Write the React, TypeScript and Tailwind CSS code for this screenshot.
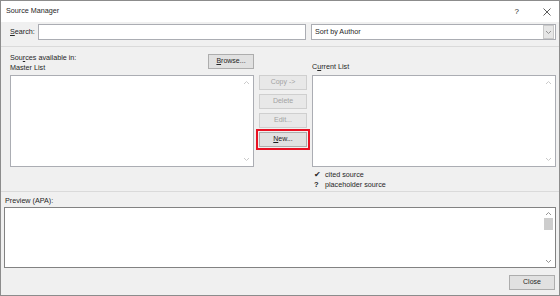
import React from 'react';

const font = { fontFamily: '"Liberation Sans", Arial, sans-serif' };

const Chevron: React.FC<{ dir: 'up' | 'down'; className?: string }> = ({ dir, className }) => (
  <svg width="7" height="5" viewBox="0 0 7 5" className={className}>
    {dir === 'up' ? (
      <polyline points="1,4 3.5,1.5 6,4" fill="none" stroke="currentColor" strokeWidth="0.9" />
    ) : (
      <polyline points="1,1 3.5,3.5 6,1" fill="none" stroke="currentColor" strokeWidth="0.9" />
    )}
  </svg>
);

const ListBox: React.FC<{ className?: string }> = ({ className }) => (
  <div className={`relative bg-white border border-[#abadb3] ${className ?? ''}`}>
    <Chevron dir="up" className="absolute right-[3px] top-[4px] text-[#c4c4c4]" />
    <Chevron dir="down" className="absolute right-[3px] bottom-[4px] text-[#c4c4c4]" />
  </div>
);

const SideButton: React.FC<{ label: React.ReactNode; disabled?: boolean }> = ({ label, disabled }) => (
  <div
    className={`h-[15px] w-[48px] flex items-center justify-center border text-[7px] ${
      disabled ? 'bg-[#e8e8e8] border-[#cfcfcf] text-[#a3a3a3]' : 'bg-[#e1e1e1] border-[#adadad] text-[#1e1e1e]'
    }`}
  >
    {label}
  </div>
);

export default function App() {
  return (
    <div style={font} className="w-[560px] h-[296px] border border-[#8c8c8c] bg-[#f0f0f0] flex flex-col text-[7.2px] text-[#262626] overflow-hidden">
      {/* title bar */}
      <div className="h-[21px] bg-white flex items-center pl-[5px] pr-[8px] shrink-0">
        <span className="flex-1">Source Manager</span>
        <span className="text-[8px] mr-[24px]">?</span>
        <svg width="8" height="8" viewBox="0 0 8 8">
          <path d="M0.5 0.5 L7.5 7.5 M7.5 0.5 L0.5 7.5" stroke="#333" strokeWidth="0.8" />
        </svg>
      </div>

      {/* search row */}
      <div className="flex items-center h-[16px] mt-[2px] pl-[9px] pr-[3px] shrink-0">
        <span className="w-[28px]">
          <span className="underline">S</span>earch:
        </span>
        <div className="w-[268px] h-[16px] bg-white border border-[#abadb3]" />
        <div className="ml-[5px] flex-1 h-[16px] bg-white border border-[#abadb3] flex items-center">
          <span className="flex-1 pl-[3px]">Sort by Author</span>
          <div className="w-[11px] h-[14px] mr-[1px] bg-[#e6e6e6] border border-[#c9c9c9] flex items-center justify-center text-[#8a8a8a]">
            <Chevron dir="down" />
          </div>
        </div>
      </div>

      <div className="mt-[6px] border-t border-[#dadada] shrink-0" />

      {/* middle section */}
      <div className="flex pl-[9px] pr-[3px] pt-[5px] shrink-0">
        <div className="w-[244px] flex flex-col">
          <div className="flex items-start justify-between h-[23px]">
            <div className="leading-[10px] pt-[1px]">
              <div>
                Sou<span className="underline">r</span>ces available in:
              </div>
              <div>Master List</div>
            </div>
            <div className="mt-[2px] h-[15px] w-[46px] flex items-center justify-center bg-[#e1e1e1] border border-[#adadad] text-[7px]">
              <span>
                <span className="underline">B</span>rowse...
              </span>
            </div>
          </div>
          <ListBox className="h-[92px]" />
        </div>

        <div className="w-[58px] flex flex-col items-center pt-[23px] gap-[4px]">
          <SideButton disabled label="Copy ->" />
          <SideButton disabled label="Delete" />
          <SideButton disabled label="Edit..." />
          <div className="border-2 border-[#e81123] p-[1px] -mt-[3px]">
            <SideButton
              label={
                <span>
                  <span className="underline">N</span>ew...
                </span>
              }
            />
          </div>
        </div>

        <div className="flex-1 flex flex-col">
          <div className="h-[23px] flex items-end pb-[2px]">
            <span>
              C<span className="underline">u</span>rrent List
            </span>
          </div>
          <ListBox className="h-[92px]" />
          <div className="pl-[2px] mt-[3px] leading-[10px]">
            <div className="flex items-center">
              <span className="w-[11px] text-[8px]">✔</span>
              <span>cited source</span>
            </div>
            <div className="flex items-center">
              <span className="w-[11px] text-[7.5px] font-bold">?</span>
              <span>placeholder source</span>
            </div>
          </div>
        </div>
      </div>

      <div className="mt-[1px] border-t border-[#dadada] shrink-0" />

      {/* preview */}
      <div className="pl-[3px] pr-[3px] pt-[4px] flex flex-col shrink-0">
        <div className="h-[11px] pl-[1px]">Preview (APA):</div>
        <div className="relative h-[61px] bg-white border border-[#828282]">
          <Chevron dir="up" className="absolute right-[3px] top-[3px] text-[#8a8a8a]" />
          <div className="absolute right-[2px] top-[10px] w-[9px] h-[12px] bg-[#cdcdcd]" />
          <Chevron dir="down" className="absolute right-[3px] bottom-[3px] text-[#8a8a8a]" />
        </div>
      </div>

      {/* footer */}
      <div className="flex justify-end pr-[4px] pt-[7px] shrink-0">
        <div className="h-[15px] w-[46px] flex items-center justify-center bg-[#e1e1e1] border border-[#adadad] text-[7px]">
          Close
        </div>
      </div>
    </div>
  );
}
